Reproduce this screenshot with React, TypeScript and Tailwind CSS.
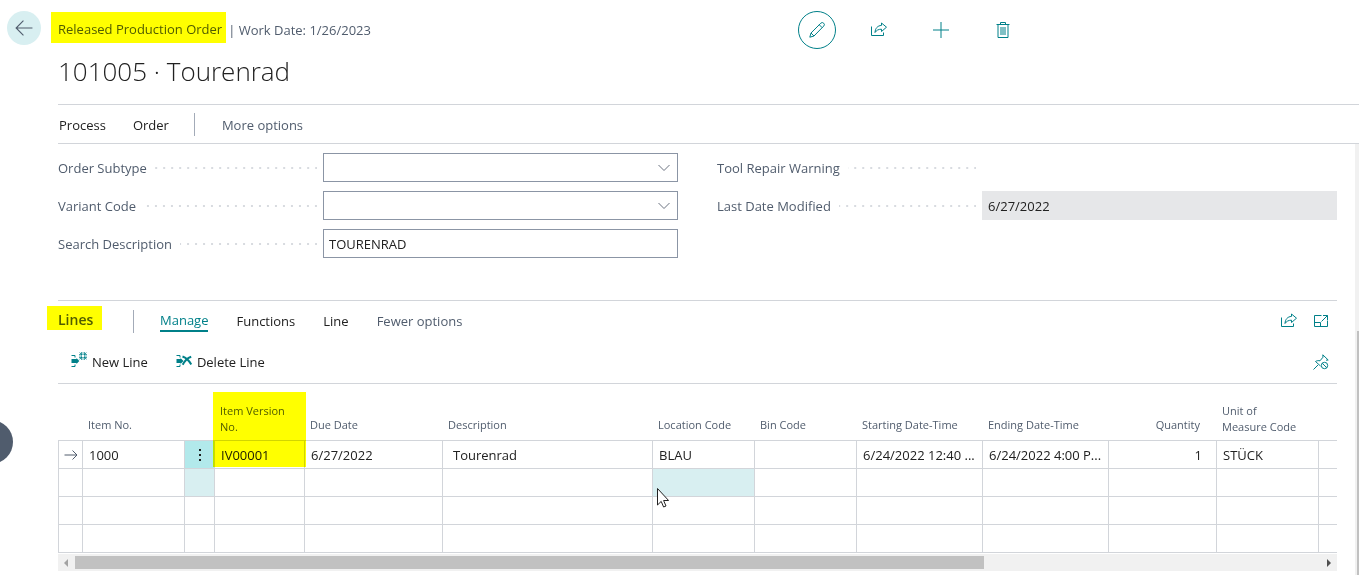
import type { ReactNode } from "react";

interface Column {
  key: string;
  label: string;
  width: string;
  align?: "right";
  twoLines?: boolean;
}

const COLUMNS: Column[] = [
  { key: "marker", label: "", width: "w-6" },
  { key: "itemNo", label: "Item No.", width: "w-[102px]" },
  { key: "menu", label: "", width: "w-[30px]" },
  { key: "version", label: "Item Version No.", width: "w-[90px]", twoLines: true },
  { key: "dueDate", label: "Due Date", width: "w-[138px]" },
  { key: "description", label: "Description", width: "w-[210px]" },
  { key: "location", label: "Location Code", width: "w-[102px]" },
  { key: "bin", label: "Bin Code", width: "w-[102px]" },
  { key: "start", label: "Starting Date-Time", width: "w-[126px]" },
  { key: "end", label: "Ending Date-Time", width: "w-[126px]" },
  { key: "quantity", label: "Quantity", width: "w-[108px]", align: "right" },
  { key: "unit", label: "Unit of Measure Code", width: "w-[102px]", twoLines: true },
  { key: "rest", label: "", width: "w-auto" },
];

const ROWS: Record<string, string>[] = [
  {
    itemNo: "1000",
    version: "IV00001",
    dueDate: "6/27/2022",
    description: "Tourenrad",
    location: "BLAU",
    start: "6/24/2022 12:40 ...",
    end: "6/24/2022 4:00 P...",
    quantity: "1",
    unit: "STÜCK",
  },
  {},
  {},
  {},
];

function Icon({ children, size = "size-4" }: { children: ReactNode; size?: string }) {
  return (
    <svg viewBox="0 0 16 16" fill="none" stroke="currentColor" className={size} aria-hidden="true">
      {children}
    </svg>
  );
}

function ShareIcon() {
  return (
    <Icon>
      <path d="M.5 4.5v9H12.5V10.5" />
      <path d="M10.5 1 15.5 5.2 10.5 9.5V7.2C7.5 7.2 5.5 8.2 4 10.5 4.2 6.5 6.5 3.6 10.5 3.4Z" />
    </Icon>
  );
}

function PencilIcon() {
  return (
    <Icon>
      <path d="M.8 15.2 2 11 11.8 1.2a1.9 1.9 0 0 1 2.9 2.9L5 14ZM2 11l3 3M10.3 2.8l2.9 2.9" />
    </Icon>
  );
}

function TrashIcon() {
  return (
    <Icon>
      <path d="M1.5 2.5h13M5.5 2.5v-2h5v2M3 2.5v13h10v-13M6 5v8M8 5v8M10 5v8" />
    </Icon>
  );
}

function ExpandIcon() {
  return (
    <Icon>
      <path d="M8.5 2.5H1.5v11h13V7.5M1.5 9.5h6v4M10 2.5h4.5V7M14.5 2.5 8.5 8.5" />
    </Icon>
  );
}

function UnpinIcon() {
  return (
    <Icon>
      <path d="M.5 15.5 5 11M7.5 12 2.5 7.5C4 6.5 5.5 6.5 7 6.8L10 3.2 9.8.8 15.2 6 13 6.2" />
      <circle cx="11.5" cy="11.5" r="3.2" />
      <path d="m9.3 9.3 4.4 4.4" />
    </Icon>
  );
}

function NewLineIcon() {
  return (
    <Icon>
      <path d="M.5 3.5h3.500v2M.5 14.500h3.500v-2" />
      <path d="M.5 7h5V6l2.800 3-2.800 3v-1h-5Z" fill="currentColor" stroke="none" />
      <path d="M10.800 0v8M13.200 0v8M8 2.800h8M8 5.200h8M8.800.6l6.800 6.800M15.200.6 8.400 7.400" />
      <circle cx="12" cy="4" r="1.400" fill="white" stroke="none" />
    </Icon>
  );
}

function DeleteLineIcon() {
  return (
    <Icon>
      <path d="M.5 3.5h3.5v2M.5 14.5h3.5v-2" />
      <path d="M.5 7h4V6l3 3-3 3v-1h-4Z" fill="currentColor" stroke="none" />
      <path d="M6.500 4.500c3.500 1.200 6.500 4 8.800 8M15.200 4.800c-3.500 1.200-6.500 4-8.500 8" strokeWidth="2" />
    </Icon>
  );
}

function Field({ id, label, children }: { id: string; label: string; children?: ReactNode }) {
  return (
    <div className="flex h-[29px] items-center">
      <div className="flex w-[265px] shrink-0 items-center pr-1.5">
        <label htmlFor={id} className="pr-2 text-[#505c6d]">
          {label}
        </label>
        <span className="h-0.5 flex-1 bg-[linear-gradient(to_right,transparent_6px,#d8dbe0_6px)] bg-[length:8px_2px] bg-right" />
      </div>
      <div className="h-full flex-1">{children}</div>
    </div>
  );
}

function Dropdown({ id }: { id: string }) {
  return (
    <div className="relative h-full">
      <select id={id} className="h-full w-full appearance-none border border-[#8b95a5] bg-white px-1">
        <option></option>
      </select>
      <svg
        viewBox="0 0 12 8"
        fill="none"
        stroke="#6b7280"
        className="pointer-events-none absolute top-[11px] right-2 h-2 w-3"
        aria-hidden="true"
      >
        <path d="m.5 1 5.5 5.5L11.5 1" />
      </svg>
    </div>
  );
}

function cellStyle(key: string, row: number) {
  if (key === "menu" && row === 0) return "bg-[#b2e9eb]";
  if (key === "menu" && row === 1) return "bg-[#d8eff1]";
  if (key === "location" && row === 1) return "bg-[#d8eff1]";
  return "";
}

function cellPadding(col: Column) {
  if (col.key === "marker" || col.key === "menu") return "text-center";
  if (col.key === "description") return "pl-2.5 pr-1";
  if (col.align === "right") return "pr-3.5 text-right";
  return "pl-1.5";
}

function headerPadding(col: Column) {
  if (col.twoLines) return "pb-[5px] pr-4 pl-1.5 text-left";
  if (col.align === "right") return "pb-[7px] pr-4 text-right";
  return "pb-[7px] pr-2 pl-1.5 text-left";
}

function LinesTable() {
  return (
    <table className="w-full table-fixed border-separate border-spacing-0">
      <thead>
        <tr className="h-[57px]">
          {COLUMNS.map((col) => (
            <th
              key={col.key}
              scope="col"
              className={`relative border-b border-[#d2d5da] align-bottom text-[11px] leading-4 font-normal text-[#505c6d] ${col.width} ${headerPadding(col)}`}
            >
              {col.label}
              {col.key === "version" && (
                <span className="pointer-events-none absolute top-2 -left-px z-10 h-[75px] w-[93px] bg-[#ffff00] mix-blend-multiply" />
              )}
            </th>
          ))}
        </tr>
      </thead>
      <tbody>
        {ROWS.map((row, i) => (
          <tr key={i} className="h-7">
            {COLUMNS.map((col) => (
              <td
                key={col.key}
                className={`border-b border-l border-[#d2d5da] leading-5 whitespace-nowrap text-[#212121] ${cellPadding(col)} ${cellStyle(col.key, i)}`}
              >
                {col.key === "marker" && i === 0 && (
                  <svg viewBox="0 0 14 12" fill="none" stroke="#505c6d" className="mx-auto h-3 w-3.5" aria-label="Current line">
                    <path d="M.5 6h12.5M8.5 1.5 13 6l-4.5 4.5" />
                  </svg>
                )}
                {col.key === "menu" && i === 0 && (
                  <button type="button" aria-label="Show more options" className="block w-full">
                    <svg viewBox="0 0 4 16" fill="#212121" className="mx-auto h-4 w-1">
                      <path d="M1 2h2v2H1zM1 7h2v2H1zM1 12h2v2H1z" />
                    </svg>
                  </button>
                )}
                {row[col.key]}
              </td>
            ))}
          </tr>
        ))}
      </tbody>
    </table>
  );
}

export default function App() {
  return (
    <div className="relative overflow-hidden bg-white font-['Open_Sans','Noto_Sans',sans-serif] text-[13px] leading-5 text-[#212121]">
      <header className="flex h-[104px] items-start pl-[7px]">
        <button
          type="button"
          aria-label="Back"
          className="mt-[11px] flex size-[34px] shrink-0 items-center justify-center rounded-full bg-[#d8eff1] text-[#505c6d]"
        >
          <Icon size="size-[18px]">
            <path d="M1 8h14.5M7.5 1.5 1 8l6.5 6.5" />
          </Icon>
        </button>
        <div className="ml-2.5 w-[747px]">
          <div className="mt-3 flex h-[31px] items-center text-[#505c6d]">
            <span className="bg-[#ffff00] pt-2 pr-1 pb-1 pl-[7px] leading-[19px] text-[#505c00]">Released Production Order</span>
            <span className="pt-1 pl-0.5">| Work Date: 1/26/2023</span>
          </div>
          <h1 className="mt-2 pl-[7px] text-[26px] leading-10 font-light">101005 · Tourenrad</h1>
        </div>
        <div className="mt-[11px] flex gap-6 text-[#008089]">
          <button type="button" aria-label="Edit" className="flex size-[38px] items-center justify-center rounded-full border border-[#008089]">
            <PencilIcon />
          </button>
          <button type="button" aria-label="Share" className="flex size-[38px] items-center justify-center">
            <ShareIcon />
          </button>
          <button type="button" aria-label="New" className="flex size-[38px] items-center justify-center">
            <Icon>
              <path d="M8 0v16M0 8h16" />
            </Icon>
          </button>
          <button type="button" aria-label="Delete" className="flex size-[38px] items-center justify-center">
            <TrashIcon />
          </button>
        </div>
      </header>

      <nav className="ml-[58px] flex h-10 items-center border-y border-[#d2d5da] pt-0.5">
        <button type="button" className="ml-px">Process</button>
        <button type="button" className="ml-[27px]">Order</button>
        <span className="mb-0.5 ml-[25px] h-[23px] w-px bg-[#a3abb8]" />
        <button type="button" className="ml-[27px] text-[#505c6d]">More options</button>
      </nav>

      <div className="flex pl-[58px]">
        <main className="min-w-0 flex-1 pr-[18px] pb-1">
          <section className="grid grid-cols-2 gap-x-[39px] pt-[9px] pb-[42px]">
            <div className="grid content-start gap-[9px]">
              <Field id="order-subtype" label="Order Subtype">
                <Dropdown id="order-subtype" />
              </Field>
              <Field id="variant-code" label="Variant Code">
                <Dropdown id="variant-code" />
              </Field>
              <Field id="search-description" label="Search Description">
                <input
                  id="search-description"
                  defaultValue="TOURENRAD"
                  className="h-full w-full border border-[#8b95a5] px-[5px]"
                />
              </Field>
            </div>
            <div className="grid content-start gap-[9px]">
              <Field id="tool-repair" label="Tool Repair Warning">
                <output id="tool-repair" />
              </Field>
              <Field id="last-modified" label="Last Date Modified">
                <input id="last-modified" readOnly value="6/27/2022" className="h-full w-full bg-[#e6e7e9] px-1.5" />
              </Field>
            </div>
          </section>

          <section className="border-t border-[#d2d5da]">
            <div className="flex h-10 items-center">
              <h2 className="-ml-[11px] mb-1.5 w-[55px] bg-[#ffff00] pt-1 pl-[11px] text-[14px] leading-5 font-semibold text-[#505c00]">
                Lines
              </h2>
              <span className="ml-[31px] h-[23px] w-px bg-[#a3abb8]" />
              <button type="button" className="ml-[26px] border-b-2 border-[#008089] text-[#008089]">Manage</button>
              <button type="button" className="ml-7">Functions</button>
              <button type="button" className="ml-7">Line</button>
              <button type="button" className="ml-7 text-[#505c6d]">Fewer options</button>
              <div className="mr-2 ml-auto flex gap-4 text-[#008089]">
                <button type="button" aria-label="Share lines"><ShareIcon /></button>
                <button type="button" aria-label="Expand lines"><ExpandIcon /></button>
              </div>
            </div>
            <div className="flex h-[42px] items-center">
              <button type="button" className="ml-[13px] flex items-center gap-[5px]">
                <span className="mb-1 text-[#008089]"><NewLineIcon /></span>
                New Line
              </button>
              <button type="button" className="ml-7 flex items-center gap-[5px]">
                <span className="mb-1 text-[#008089]"><DeleteLineIcon /></span>
                Delete Line
              </button>
              <button type="button" aria-label="Unpin actions" className="mr-2 ml-auto text-[#008089]"><UnpinIcon /></button>
            </div>
          </section>

          <section className="relative border-t border-[#d2d5da]">
            <LinesTable />
            <svg viewBox="0 0 12 20" className="absolute top-[104px] left-[599px] h-5 w-3" aria-hidden="true">
              <path d="M.5.5v16.5l3.7-3.6 2.4 5.6 2.4-1-2.4-5.5h5Z" fill="white" stroke="#212121" />
            </svg>
          </section>

          <div className="mt-px flex h-[17px] items-center bg-[#f1f1f1]">
            <svg viewBox="0 0 17 17" fill="#a3a3a3" className="size-[17px]" aria-hidden="true">
              <path d="M10 5v8L6 9Z" />
            </svg>
            <div className="flex-1">
              <div className="h-[13px] w-[73%] bg-[#c1c1c1]" />
            </div>
            <svg viewBox="0 0 17 17" fill="#505050" className="size-[17px]" aria-hidden="true">
              <path d="M7 5v8l4-4Z" />
            </svg>
          </div>
        </main>
        <div className="flex w-1 flex-col items-end bg-[#f1f1f1] pt-[187px]">
          <div className="w-0.5 flex-1 bg-[#c1c1c1]" />
        </div>
      </div>

      <button
        type="button"
        aria-label="Open side panel"
        className="absolute top-[420px] -left-[31px] size-11 rounded-full bg-[#505c6d]"
      />
    </div>
  );
}
